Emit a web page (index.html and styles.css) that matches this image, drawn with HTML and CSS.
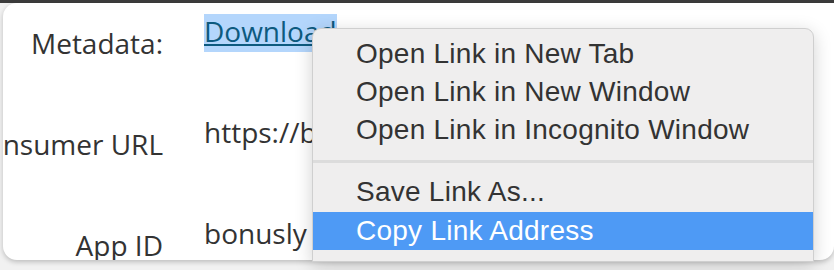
FILE: index.html
```html
<!DOCTYPE html>
<html>
<head>
<meta charset="utf-8">
<link rel="stylesheet" href="styles.css">
</head>
<body>
<div class="topbar"></div>
<div class="card">
  <div class="row">
    <div class="label">Metadata:</div>
    <div class="value"><a class="link" href="#">Download</a></div>
  </div>
  <div class="row">
    <div class="label">Consumer URL</div>
    <div class="value">https://bonus.ly/oauth/callback</div>
  </div>
  <div class="row">
    <div class="label">App ID</div>
    <div class="value">bonusly app 123456</div>
  </div>
</div>
<div class="menu">
  <div class="item">Open Link in New Tab</div>
  <div class="item">Open Link in New Window</div>
  <div class="item">Open Link in Incognito Window</div>
  <div class="sep"></div>
  <div class="item">Save Link As...</div>
  <div class="item active">Copy Link Address</div>
</div>
</body>
</html>
```

FILE: styles.css
```css
html, body {
  margin: 0;
  padding: 0;
}
body {
  width: 834px;
  height: 270px;
  overflow: hidden;
  background: #f1f1f1;
  font-family: "Liberation Sans", Arial, sans-serif;
  position: relative;
}
.topbar {
  height: 3px;
  background: #3c3c3c;
}
.card {
  margin-left: 3px;
  height: 257px;
  background: #fff;
  border-radius: 14px 0 14px 14px;
  box-shadow: 0 2px 5px rgba(0, 0, 0, 0.22);
  overflow: hidden;
  padding-top: 11px;
  box-sizing: border-box;
  color: #333;
  font-family: "Open Sans", "Liberation Sans", sans-serif;
  font-size: 28px;
}
.row {
  display: flex;
  height: 101px;
  gap: 41px;
}
.label {
  width: 160px;
  flex: none;
  display: flex;
  justify-content: flex-end;
  white-space: nowrap;
  line-height: 38px;
  padding-top: 10px;
}
.value {
  white-space: nowrap;
  line-height: 34px;
  padding-bottom: 4px;
  height: 34px;
}
.link {
  color: #0d5a7f;
  text-decoration: underline;
  text-decoration-thickness: 2px;
  text-underline-offset: 2px;
  background: #b4d6fc;
  display: inline-block;
  padding-bottom: 4px;
}
.menu {
  position: absolute;
  left: 312px;
  top: 28px;
  width: 502px;
  height: 234px;
  box-sizing: border-box;
  background: #efeeee;
  border: 1px solid #cfcfcf;
  border-radius: 9px 9px 0 0;
  box-shadow: 0 4px 18px rgba(0, 0, 0, 0.18);
  padding-top: 6px;
  font-size: 28px;
  line-height: 38px;
  letter-spacing: 0.25px;
  color: #333;
}
.item {
  padding-left: 43px;
  height: 38px;
  white-space: nowrap;
}
.item.active {
  background: #4e9af5;
  color: #fff;
  margin-top: 1px;
}
.sep {
  height: 24px;
  box-sizing: border-box;
  border-top: 11px solid transparent;
  border-bottom: 10px solid transparent;
  background: #dcdcdc;
  background-clip: padding-box;
}
```
